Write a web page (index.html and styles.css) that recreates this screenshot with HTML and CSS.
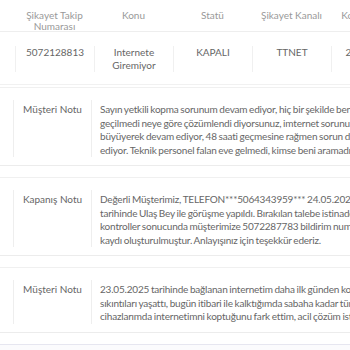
FILE: index.html
```html
<!DOCTYPE html>
<html lang="tr">
  <head>
    <meta charset="UTF-8" />
    <title>Şikayet Detayı</title>
    <link rel="stylesheet" href="styles.css">
  </head>
  <body>
    <div class="complaint">
      <div class="row head">
        <div class="cell">Şikayet Takip<br>Numarası</div>
        <div class="cell">Konu</div>
        <div class="cell">Statü</div>
        <div class="cell">Şikayet Kanalı</div>
        <div class="cell">Kontrol Tarihi</div>
      </div>
      <div class="row data">
        <div class="cell">5072128813</div>
        <div class="cell">Internete<br>Giremiyor</div>
        <div class="cell">KAPALI</div>
        <div class="cell">TTNET</div>
        <div class="cell">24.05.2025</div>
      </div>
    </div>

    <div class="note">
      <div class="note-label">Müşteri Notu</div>
      <div class="note-text">
        Sayın yetkili kopma sorunum devam ediyor, hiç bir şekilde beni arayan olmadı,<br>
        geçilmedi neye göre çözümlendi diyorsunuz, imternet sorunum hala devam ediyor ve<br>
        büyüyerek devam ediyor, 48 saati geçmesine rağmen sorun devam ediyor ve çözülmüyor<br>
        ediyor. Teknik personel falan eve gelmedi, kimse beni aramadı.
      </div>
    </div>

    <div class="note">
      <div class="note-label">Kapanış Notu</div>
      <div class="note-text">
        Değerli Müşterimiz, TELEFON***5064343959*** 24.05.2025 14:32<br>
        tarihinde Ulaş Bey ile görüşme yapıldı. Bırakılan talebe istinaden yapılan<br>
        kontroller sonucunda müşterimize 5072287783 bildirim numaralı arıza<br>
        kaydı oluşturulmuştur. Anlayışınız için teşekkür ederiz.
      </div>
    </div>

    <div class="note">
      <div class="note-label">Müşteri Notu</div>
      <div class="note-text">
        23.05.2025 tarihinde bağlanan internetim daha ilk günden kopma<br>
        sıkıntıları yaşattı, bugün itibari ile kalktığımda sabaha kadar tüm<br>
        cihazlarımda internetimni koptuğunu fark ettim, acil çözüm istiyorum.
      </div>
    </div>

    <div class="next"></div>
  </body>
</html>
```

FILE: styles.css
```css
html,
body {
  overflow: hidden;
}
body {
  font-family: Lato, "Open Sans", sans-serif;
  font-size: 10px;
  color: #666;
  margin: 0;
  padding: 0;
  width: 620px;
  background-color: #fff;
}
.row {
  display: flex;
  padding-left: 15px;
}
.cell {
  width: 79px;
  flex: none;
  text-align: center;
}
.head {
  align-items: flex-start;
  height: 32px;
  padding-top: 10px;
  box-sizing: border-box;
  color: #999;
  line-height: 11px;
  border-bottom: 1px solid #eeeeee;
}
.data {
  padding-top: 14px;
  padding-bottom: 12px;
  line-height: 13px;
  border-bottom: 1px solid #f1f1f1;
}
.data .cell {
  border-left: 1px solid #f0f0f0;
  box-sizing: border-box;
}
.note {
  display: flex;
  margin-top: 2px;
  margin-bottom: 11px;
  padding: 12px 0 8px 13px;
  line-height: 13.5px;
  border-top: 1px solid #f0f0f0;
  border-bottom: 1px solid #ececec;
}
.note-label,
.note-text {
  border-left: 1px solid #eeeeee;
  padding-top: 3px;
}
.note-label {
  width: 77px;
  flex: none;
  text-align: center;
}
.note-text {
  padding-left: 8px;
  white-space: nowrap;
  letter-spacing: -0.2px;
  word-spacing: -0.6px;
}
.next {
  height: 20px;
  border-top: 1px solid #e6e6f0;
  background-color: #fbfbfd;
}
```
